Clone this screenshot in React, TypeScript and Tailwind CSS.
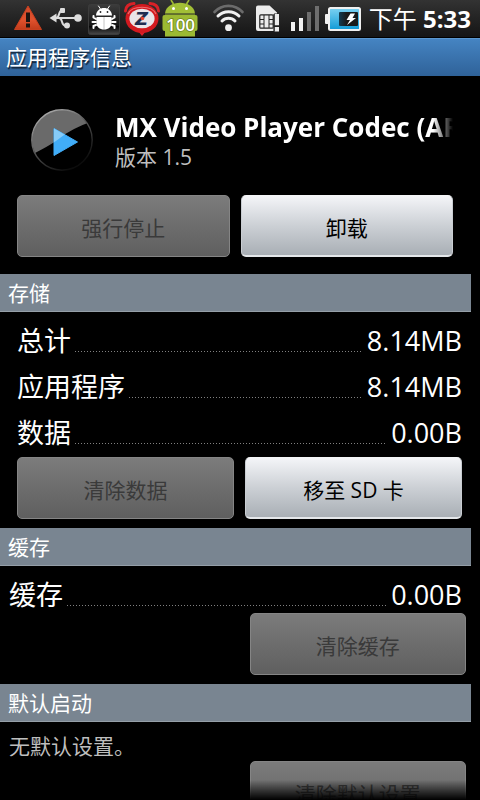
import type { ReactNode } from "react";

interface StatusIconProps {
  label: string;
  children: ReactNode;
}

function StatusIcon({ label, children }: StatusIconProps) {
  return (
    <svg viewBox="0 0 38 37" className="h-[37px] w-[38px] shrink-0" role="img" aria-label={label}>
      {children}
    </svg>
  );
}

function WarningIcon() {
  return (
    <StatusIcon label="Warning">
      <defs>
        <linearGradient id="warn" x1="0" y1="0" x2="0" y2="1">
          <stop offset="0" stopColor="#cf4a2c" />
          <stop offset="0.6" stopColor="#e0512d" />
          <stop offset="1" stopColor="#c23c1b" />
        </linearGradient>
      </defs>
      <path d="M19 6 L32.5 29.5 H5.5 Z" fill="url(#warn)" stroke="#c8401f" strokeWidth="1" strokeLinejoin="round" />
      <rect x="17" y="12.5" width="4" height="9.5" fill="#1c1411" />
      <rect x="17" y="23.5" width="4" height="4" fill="#1c1411" />
    </StatusIcon>
  );
}

function UsbIcon() {
  return (
    <StatusIcon label="USB">
      <g fill="none" stroke="#dcdcdc" strokeWidth="2">
        <path d="M8 18 H29" />
        <path d="M9 18 C13 18 11 10.5 15 10.5" />
        <path d="M12 18 C16 18 14 25.5 18 25.5" />
      </g>
      <g fill="#dcdcdc">
        <path d="M2.5 18 L9.5 13.5 V22.5 Z" />
        <circle cx="31" cy="18" r="3.8" />
        <rect x="13" y="8" width="5" height="5" rx="1" />
        <circle cx="20" cy="25.5" r="3" />
      </g>
    </StatusIcon>
  );
}

function DebugIcon() {
  return (
    <StatusIcon label="Debugging">
      <defs>
        <linearGradient id="bug" x1="0" y1="0" x2="0" y2="1">
          <stop offset="0" stopColor="#3c3c3c" />
          <stop offset="0.7" stopColor="#161616" />
          <stop offset="0.72" stopColor="#050505" />
          <stop offset="1" stopColor="#4a4a4a" />
        </linearGradient>
      </defs>
      <rect x="3.5" y="4.5" width="31" height="30" rx="2" fill="url(#bug)" stroke="#3c3c3c" />
      <g stroke="#fff" fill="none" strokeLinecap="round">
        <path d="M13.5 6 L15.5 9 M24.5 6 L22.5 9" strokeWidth="1" />
        <path d="M11 19 L8.5 17.5 V16 M11 22 H7.5 M11 25 L8.5 26 V28" strokeWidth="2" />
        <path d="M27 19 L29.5 17.5 V16 M27 22 H30.5 M27 25 L29.5 26 V28" strokeWidth="2" />
      </g>
      <path d="M11 15.5 C11.5 5.5 26.5 5.5 27 15.5 Z" fill="#fff" />
      <path d="M11.5 17 H26.5 V23 C26.5 27 23.5 29.5 19 29.5 C14.5 29.5 11.5 27 11.5 23 Z" fill="#fff" />
      <path d="M19 17 V29" stroke="#b5b5b5" strokeWidth="0.8" />
      <circle cx="15.5" cy="12" r="0.9" fill="#222" />
      <circle cx="22.5" cy="12" r="0.9" fill="#222" />
    </StatusIcon>
  );
}

function AlarmIcon() {
  return (
    <StatusIcon label="Alarm">
      <path d="M2.5 11 Q3 4 11 3.5" fill="none" stroke="#d92127" strokeWidth="3" strokeLinecap="round" />
      <path d="M35.5 11 Q35 4 27 3.5" fill="none" stroke="#d92127" strokeWidth="3" strokeLinecap="round" />
      <path d="M15 31 L19 36 L23 31 Z" fill="#d92127" />
      <ellipse cx="19" cy="18.5" rx="16.5" ry="14.5" fill="#d3191f" />
      <path d="M5 14 C9 5 29 5 33 14" fill="none" stroke="#ee6d6d" strokeWidth="1.2" />
      <ellipse cx="19" cy="18.5" rx="12.6" ry="9.8" fill="#e9e4e8" />
      <text
        x="18.5"
        y="25"
        textAnchor="middle"
        fontFamily="DejaVu Sans, sans-serif"
        fontSize="18"
        fontWeight="bold"
        fontStyle="italic"
        fill="#1f2c4f"
      >
        Z
      </text>
      <circle cx="19.5" cy="18.5" r="1.8" fill="#e8432e" />
    </StatusIcon>
  );
}

function BatteryRobotIcon() {
  return (
    <StatusIcon label="Battery level">
      <path d="M10 0 L12.5 4 M28 0 L25.5 4" stroke="#a0bc33" strokeWidth="1.6" />
      <path d="M4 13.5 C5 -1 33 -1 34 13.5 Z" fill="#a2bf36" />
      <circle cx="12.5" cy="8.5" r="1.5" fill="#fff" />
      <circle cx="25.5" cy="8.5" r="1.5" fill="#fff" />
      <path d="M4 14.5 H34 V36.5 H4 Z" fill="#9cb932" />
      <rect x="1.5" y="15" width="4" height="16" rx="2" fill="#9cb932" />
      <rect x="32.5" y="15" width="4" height="16" rx="2" fill="#9cb932" />
      <text
        x="19.5"
        y="31"
        textAnchor="middle"
        fontFamily="Open Sans, sans-serif"
        fontSize="17"
        fontWeight="600"
        stroke="#6c8420"
        strokeWidth="1.5"
        paintOrder="stroke"
        fill="#fff"
      >
        100
      </text>
    </StatusIcon>
  );
}

function WifiIcon() {
  return (
    <StatusIcon label="Wi-Fi">
      <g fill="none" strokeLinecap="round">
        <path d="M5.5 12 C13 3.8 26 3.8 33.5 12" stroke="#6b6b6b" strokeWidth="2.6" />
        <path d="M9 16 C14.5 10.2 24.5 10.2 30 16" stroke="#f0f0f0" strokeWidth="3" />
        <path d="M13 21 C16.5 17.2 22.5 17.2 26 21" stroke="#f0f0f0" strokeWidth="3" />
      </g>
      <circle cx="19.5" cy="27.7" r="3.4" fill="#f0f0f0" />
    </StatusIcon>
  );
}

function SimIcon() {
  return (
    <StatusIcon label="SIM card">
      <path d="M11 5.5 H22.5 L30 12.5 V13.5 H27 V31 H11 Q9 31 9 29 V7.5 Q9 5.5 11 5.5 Z" fill="#ececec" />
      <rect x="12.8" y="14.8" width="13.4" height="13.4" rx="1" fill="#ececec" stroke="#222" strokeWidth="1.2" />
      <path d="M13 19.5 H17 V28 M13 24 H17 M17 19.5 V15 M22 15 V28 M22 19.5 H26 M22 24 H26" fill="none" stroke="#222" strokeWidth="1" />
      <rect x="27.5" y="14" width="4.5" height="11.5" fill="#ececec" />
      <rect x="27.5" y="27" width="4.5" height="4.5" fill="#ececec" />
      <path d="M27 14 V31.5 M27 26.2 H32" stroke="#222" strokeWidth="1.2" />
    </StatusIcon>
  );
}

function SignalIcon() {
  return (
    <StatusIcon label="Signal">
      <rect x="6" y="22" width="4" height="9" fill="#f2f2f2" />
      <rect x="14" y="18" width="4" height="13" fill="#f2f2f2" />
      <rect x="22" y="12" width="4" height="19" fill="#6e6e6e" />
      <rect x="30" y="6" width="4" height="25" fill="#6e6e6e" />
    </StatusIcon>
  );
}

function ChargingIcon() {
  return (
    <StatusIcon label="Charging">
      <defs>
        <linearGradient id="charge" x1="0" y1="0" x2="0" y2="1">
          <stop offset="0" stopColor="#7cd2f2" />
          <stop offset="1" stopColor="#0f9ad6" />
        </linearGradient>
        <linearGradient id="cell" x1="0" y1="0" x2="1" y2="0">
          <stop offset="0" stopColor="#123c52" />
          <stop offset="0.4" stopColor="#1a1a1a" />
        </linearGradient>
      </defs>
      <rect x="2" y="14" width="5" height="10" rx="1" fill="#f0f0f0" />
      <rect x="6" y="8" width="31" height="22" rx="1.5" fill="url(#charge)" stroke="#f0f0f0" strokeWidth="2" />
      <rect x="16" y="12" width="19" height="14" rx="1" fill="url(#cell)" />
      <path d="M27.5 13.5 L23.5 20 H27 L24 25 L33 18 H29.5 L32 13.5 Z" fill="#fff" />
    </StatusIcon>
  );
}

function PlayIcon() {
  return (
    <svg viewBox="0 0 62 62" className="size-[62px] shrink-0" role="img" aria-label="MX Video Player">
      <defs>
        <linearGradient id="ring" x1="0" y1="0" x2="0.6" y2="1">
          <stop offset="0" stopColor="#c4c4c4" />
          <stop offset="0.6" stopColor="#4a4a4a" />
          <stop offset="1" stopColor="#0c0c0c" />
        </linearGradient>
        <clipPath id="disc">
          <circle cx="31" cy="31" r="30" />
        </clipPath>
        <clipPath id="gloss">
          <path d="M0 0 H62 V12 Q40 20 29 29 Q22 35 0 46 Z" />
        </clipPath>
      </defs>
      <circle cx="31" cy="31" r="30" fill="#000" />
      <g clipPath="url(#disc)">
        <path d="M0 0 H62 V12 Q40 20 29 29 Q22 35 0 46 Z" fill="#6a6a6a" />
      </g>
      <path d="M23 19.5 L46.5 33 L23 46.5 Z" fill="#41adf8" stroke="#41adf8" strokeLinejoin="round" />
      <path d="M23 19.5 L46.5 33 L23 46.5 Z" fill="#86cbf8" clipPath="url(#gloss)" />
      <circle cx="31" cy="31" r="30.2" fill="none" stroke="url(#ring)" strokeWidth="1.4" />
    </svg>
  );
}

interface ActionButtonProps {
  children: ReactNode;
  disabled?: boolean;
}

function ActionButton({ children, disabled = false }: ActionButtonProps) {
  return (
    <button
      disabled={disabled}
      className="h-[62px] w-full rounded-[5px] border border-b-2 border-x-[#c9cdd2] border-t-[#f4f5f7] border-b-[#e4e7ea] bg-linear-to-b from-[#f4f5f8] via-[#ccd0d5] to-[#a9afb5] pt-1 text-[21px] leading-7 text-black disabled:border-b disabled:border-[#858585] disabled:from-[#7c7c7c] disabled:via-[#6d6d6d] disabled:to-[#5f5f5f] disabled:text-[#3a3a3a]"
    >
      {children}
    </button>
  );
}

function SectionHeader({ children }: { children: ReactNode }) {
  return (
    <h2 className="mr-[9px] flex h-[38px] items-center border-b border-[#959fa8] bg-[#798591] px-2 text-[21px] leading-7 text-white">
      {children}
    </h2>
  );
}

function SizeRow({ label, value }: { label: string; value: string }) {
  return (
    <div className="flex h-10 items-start text-[27px] leading-[44px]">
      <dt>{label}</dt>
      <span className="mx-1 mb-[7px] h-px flex-1 self-end bg-[repeating-linear-gradient(90deg,#808080_0_1px,transparent_1px_3px)]" />
      <dd>{value}</dd>
    </div>
  );
}

export default function App() {
  return (
    <div className="relative flex h-screen flex-col overflow-hidden bg-black font-['Open_Sans','Noto_Sans_CJK_SC',sans-serif] text-white">
      <header className="shrink-0">
        <div className="flex h-[38px] items-start justify-between border-b border-black bg-linear-to-b from-[#333333] to-[#151515] px-[9px]">
          <div className="flex">
            <WarningIcon />
            <UsbIcon />
            <DebugIcon />
            <AlarmIcon />
            <BatteryRobotIcon />
          </div>
          <div className="flex">
            <WifiIcon />
            <SimIcon />
            <SignalIcon />
            <ChargingIcon />
            <time className="ml-2 text-2xl leading-[38px] whitespace-nowrap">
              下午 <b>5:33</b>
            </time>
          </div>
        </div>
        <h1 className="h-[38px] border-t border-[#5b97cf] bg-linear-to-b from-[#4584c2] to-[#2f6299] px-[6px] text-[21px] leading-9 text-shadow-[1px_2px_1px_#000000b0]">
          应用程序信息
        </h1>
      </header>

      <main className="min-h-0 flex-1 overflow-y-auto [scrollbar-width:none]">
        <div className="flex gap-[22px] pt-[33px] pr-[27px] pl-[31px]">
          <PlayIcon />
          <div className="min-w-0 flex-1">
            <p className="overflow-hidden mask-r-from-[calc(100%-20px)] mask-r-to-100% text-[26px] leading-9 font-bold whitespace-nowrap">
              MX Video Player Codec (ARMv7)
            </p>
            <p className="text-[21px] leading-6 text-[#bebebe]">版本 1.5</p>
          </div>
        </div>
        <div className="mt-6 mb-[17px] grid grid-cols-2 gap-[11px] pr-[27px] pl-[17px]">
          <ActionButton disabled>强行停止</ActionButton>
          <ActionButton>卸载</ActionButton>
        </div>

        <SectionHeader>存储</SectionHeader>
        <div className="pt-[7px] pr-[18px] pb-[9px] pl-[17px]">
          <dl className="flex flex-col gap-[6px]">
            <SizeRow label="总计" value="8.14MB" />
            <SizeRow label="应用程序" value="8.14MB" />
            <SizeRow label="数据" value="0.00B" />
          </dl>
          <div className="mt-[6px] grid grid-cols-2 gap-[11px]">
            <ActionButton disabled>清除数据</ActionButton>
            <ActionButton>移至 SD 卡</ActionButton>
          </div>
        </div>

        <SectionHeader>缓存</SectionHeader>
        <div className="pt-[7px] pb-[9px]">
          <dl className="pr-[18px] pl-[9px]">
            <SizeRow label="缓存" value="0.00B" />
          </dl>
          <div className="ml-auto w-[48%] pr-[14px]">
            <ActionButton disabled>清除缓存</ActionButton>
          </div>
        </div>

        <SectionHeader>默认启动</SectionHeader>
        <div className="pt-[9px]">
          <p className="px-[9px] text-[21px] leading-[30px] text-[#bebebe]">无默认设置。</p>
          <div className="ml-auto w-[48%] pr-[14px]">
            <ActionButton disabled>清除默认设置</ActionButton>
          </div>
        </div>
      </main>
      <div className="pointer-events-none absolute inset-x-0 bottom-0 h-5 bg-linear-to-b from-transparent to-black" />
    </div>
  );
}
